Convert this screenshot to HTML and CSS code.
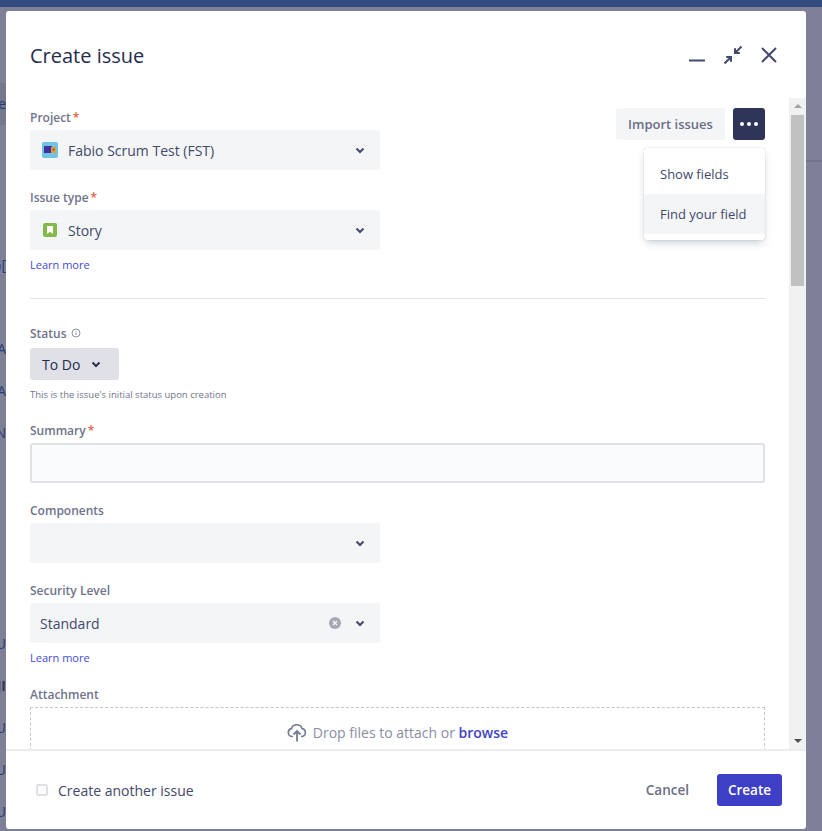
FILE: index.html
```html
<!DOCTYPE html>
<html lang="en">
<head>
<meta charset="utf-8">
<title>Create issue</title>
<link rel="stylesheet" href="styles.css">
</head>
<body>
<div class="page">
  <div class="topbar"></div>
  <div class="strip">
    <span class="frag frag-a band">ie</span>
    <span class="frag frag-b">G[</span>
    <span class="frag frag-c">A</span>
    <span class="frag">A</span>
    <span class="frag">'N</span>
    <span class="frag frag-d">U</span>
    <span class="frag bold">JI</span>
    <span class="frag">U</span>
    <span class="frag">U</span>
    <span class="frag">U</span>
  </div>
  <div class="rule-right"></div>
</div>
<section class="modal">
  <header class="modal-head">
    <h1>Create issue</h1>
    <div class="win-icons">
      <svg width="16" height="16" viewBox="0 0 16 16"><path d="M0 13.5h16" stroke="#42496b" stroke-width="2" fill="none"/></svg>
      <svg width="20" height="20" viewBox="0 0 20 20"><path d="M18.5 1.5L13 7M12 3.2V8h4.8" stroke="#42496b" stroke-width="2" fill="none"/><path d="M1.5 18.5L7 13M3.2 12H8v4.8" stroke="#42496b" stroke-width="2" fill="none"/></svg>
      <svg width="16" height="16" viewBox="0 0 16 16"><path d="M1 1l14 14M15 1L1 15" stroke="#42496b" stroke-width="2" fill="none"/></svg>
    </div>
  </header>
  <div class="modal-body">
    <div class="form">
      <div class="top-row">
        <div class="top-fields">
          <label class="label first">Project<span class="req">*</span></label>
          <div class="select">
            <svg class="ico" width="16" height="16" viewBox="0 0 16 16"><rect width="16" height="16" rx="2" fill="#6fc3e6"/><rect x="2" y="4" width="8" height="7" fill="#43309c"/><rect x="9" y="5" width="5" height="6" fill="#d9a13a"/><rect x="10.500" y="6.500" width="2" height="2" fill="#b5482f"/></svg>
            <span class="val">Fabio Scrum Test (FST)</span>
            <svg class="chev" width="10" height="7" viewBox="0 0 10 7"><path d="M1.500 1.500L5 5l3.500-3.500" stroke="#42496b" stroke-width="2" fill="none"/></svg>
          </div>
          <label class="label">Issue type<span class="req">*</span></label>
          <div class="select">
            <svg class="ico story" width="14" height="14" viewBox="0 0 14 14"><rect width="14" height="14" rx="2" fill="#84bb48"/><path d="M4 3h6v8L7 8.800 4 11z" fill="#fff"/></svg>
            <span class="val">Story</span>
            <svg class="chev" width="10" height="7" viewBox="0 0 10 7"><path d="M1.500 1.500L5 5l3.500-3.500" stroke="#42496b" stroke-width="2" fill="none"/></svg>
          </div>
          <a class="learn">Learn more</a>
        </div>
        <div class="actions">
          <button class="btn-import">Import issues</button>
          <button class="btn-dots"><i></i><i></i><i></i></button>
          <div class="menu">
            <div class="menu-item">Show fields</div>
            <div class="menu-item active">Find your field</div>
          </div>
        </div>
      </div>
      <hr class="divider">
      <label class="label status-label">Status
        <svg class="info" width="10" height="10" viewBox="0 0 10 10"><circle cx="5" cy="5" r="4" stroke="#8f92a8" fill="none"/><path d="M5 4.500v2.500M5 2.700v1" stroke="#8f92a8" fill="none"/></svg>
      </label>
      <button class="btn-status">To Do
        <svg width="10" height="7" viewBox="0 0 10 7"><path d="M1.500 1.500L5 5l3.500-3.500" stroke="#2b3052" stroke-width="2" fill="none"/></svg>
      </button>
      <p class="helper">This is the issue's initial status upon creation</p>
      <label class="label summary-label">Summary<span class="req">*</span></label>
      <div class="input"></div>
      <label class="label">Components</label>
      <div class="select">
        <span class="val"></span>
        <svg class="chev" width="10" height="7" viewBox="0 0 10 7"><path d="M1.500 1.500L5 5l3.500-3.500" stroke="#42496b" stroke-width="2" fill="none"/></svg>
      </div>
      <label class="label">Security Level</label>
      <div class="select plain">
        <span class="val">Standard</span>
        <svg class="clear" width="12" height="12" viewBox="0 0 12 12"><circle cx="6" cy="6" r="6" fill="#a5a7b5"/><path d="M4 4l4 4M8 4l-4 4" stroke="#f4f5f7" stroke-width="1.500"/></svg>
        <svg class="chev" width="10" height="7" viewBox="0 0 10 7"><path d="M1.500 1.500L5 5l3.500-3.500" stroke="#42496b" stroke-width="2" fill="none"/></svg>
      </div>
      <a class="learn">Learn more</a>
      <label class="label attach-label">Attachment</label>
      <div class="drop">
        <svg width="20" height="18" viewBox="0 0 20 18"><path d="M6 12.500H5A4 4 0 0 1 4.500 4.600 5.500 5.500 0 0 1 15 4.600 4 4 0 0 1 15 12.500h-1" stroke="#757a93" stroke-width="1.600" fill="none"/><path d="M10 17.500V7.500M6.500 10.500L10 7l3.500 3.500" stroke="#757a93" stroke-width="1.800" fill="none"/></svg>
        <span>Drop files to attach or <a class="browse">browse</a></span>
      </div>
    </div>
    <div class="scrollbar">
      <span class="arrow-up"></span>
      <div class="thumb"></div>
      <span class="arrow-down"></span>
    </div>
  </div>
  <footer class="modal-foot">
    <label class="check"><span class="box"></span>Create another issue</label>
    <div class="foot-btns">
      <button class="btn-cancel">Cancel</button>
      <button class="btn-create">Create</button>
    </div>
  </footer>
</section>
</body>
</html>
```

FILE: styles.css
```css
* { box-sizing: border-box; }
html, body { margin: 0; padding: 0; height: 100%; }
body {
  font-family: "Open Sans", "Noto Sans", sans-serif;
  font-size: 14px;
  color: #42496b;
  background: #7e8098;
  overflow: hidden;
}
.page { position: relative; height: 831px; }
.topbar { height: 7px; background: #344b7f; }
.strip {
  width: 6px;
  overflow: hidden;
  display: flex;
  flex-direction: column;
  padding-top: 76px;
}
.frag {
  height: 42px;
  line-height: 42px;
  font-size: 14px;
  color: #2b3a70;
  display: flex;
  justify-content: flex-end;
  white-space: nowrap;
}
.band { background: #75778f; }
.frag-b { margin-top: 119px; }
.frag-c { margin-top: 42px; }
.frag-d { margin-top: 169px; }
.bold { font-weight: 700; color: #3b3550; }
.rule-right { position: absolute; left: 806px; right: 0; top: 160px; height: 2px; background: #72748e; }

.modal {
  position: absolute;
  left: 6px;
  top: 11px;
  width: 800px;
  height: 818px;
  background: #fff;
  border-radius: 3px;
  display: flex;
  flex-direction: column;
  overflow: hidden;
}
.modal-head {
  height: 87px;
  flex: none;
  display: flex;
  justify-content: space-between;
  align-items: flex-start;
  padding: 32px 29px 0 24px;
}
h1 {
  margin: 0;
  font-size: 20px;
  line-height: 26px;
  font-weight: 500;
  color: #262b4d;
}
.win-icons { display: flex; gap: 18px; align-items: center; margin-top: 2px; }
.modal-body { flex: 1; min-height: 0; display: flex; }
.form { flex: 1; min-width: 0; overflow: hidden; padding: 0 24px; }
.top-row { display: flex; justify-content: space-between; align-items: flex-start; }
.top-fields { width: 350px; }
.label {
  display: block;
  font-size: 12px;
  line-height: 16px;
  font-weight: 600;
  color: #70738c;
  margin: 20px 0 4px;
}
.label.first { margin-top: 12px; }
.req { color: #de5e3e; margin-left: 2px; }
.select {
  width: 350px;
  height: 40px;
  background: #f4f5f7;
  border-radius: 3px;
  display: flex;
  align-items: center;
  padding: 0 15px 0 12px;
  color: #42496b;
}
.ico { flex: none; margin-right: 10px; }
.ico.story { margin: 0 11px 0 1px; }
.val { flex: 1; }
.plain { padding-left: 10px; }
.clear { margin-right: 14px; }
.learn {
  display: block;
  font-size: 11px;
  line-height: 14px;
  margin-top: 8px;
  color: #4549d6;
}
.actions { position: relative; display: flex; gap: 8px; margin-top: 10px; }
.btn-import {
  height: 32px;
  width: 109px;
  border: 0;
  padding: 0;
  border-radius: 3px;
  background: #f4f5f7;
  font: 600 13px "Open Sans", "Noto Sans", sans-serif;
  color: #6b6e88;
}
.btn-dots {
  width: 32px;
  height: 32px;
  border: 0;
  border-radius: 3px;
  background: #2f3459;
  display: flex;
  align-items: center;
  justify-content: center;
  gap: 3px;
  padding: 0;
}
.btn-dots i { width: 4px; height: 4px; border-radius: 50%; background: #fff; }
.menu {
  position: absolute;
  right: 0;
  top: 40px;
  width: 121px;
  padding: 6px 0;
  background: #fff;
  border-radius: 3px;
  box-shadow: 0 4px 8px -2px rgba(9, 30, 66, .25), 0 0 1px rgba(9, 30, 66, .31);
}
.menu-item { height: 40px; line-height: 40px; padding-left: 16px; font-size: 13px; color: #42496b; white-space: nowrap; }
.menu-item.active { background: #f4f5f7; }
.divider { border: 0; height: 1px; background: #dfe1e6; margin: 26px 0 0; }
.status-label { margin: 27px 0 6px; display: flex; align-items: center; gap: 4px; }
.info { margin-top: -2px; }
.btn-status {
  display: flex;
  align-items: center;
  gap: 11px;
  width: 89px;
  height: 32px;
  padding: 0 0 0 12px;
  border: 0;
  border-radius: 3px;
  background: #dfe1e6;
  font: 400 14px "Open Sans", "Noto Sans", sans-serif;
  color: #262b4d;
}
.helper { margin: 8px 0 0; font-size: 9.500px; line-height: 14px; color: #70738c; }
.summary-label { margin-top: 21px; }
.input { height: 40px; border: 2px solid #dfe1e6; border-radius: 3px; background: #fafbfc; }
.attach-label { margin-top: 22px; }
.drop {
  height: 80px;
  border: 1px dashed #c1c7d0;
  display: flex;
  justify-content: center;
  align-items: flex-start;
  gap: 6px;
  padding-top: 15px;
  color: #8a8da3;
}
.drop svg { margin-top: 1px; }
.browse { color: #3f44c8; font-weight: 600; }
.scrollbar {
  width: 17px;
  flex: none;
  background: #f1f1f1;
  display: flex;
  flex-direction: column;
  align-items: center;
  padding: 0 2px;
}
.arrow-up, .arrow-down { width: 0; height: 0; border: 4px solid transparent; flex: none; }
.arrow-up { border-bottom: 4px solid #a3a3a3; border-top: 0; margin: 6px 0 7px; }
.arrow-down { border-top: 4px solid #505050; border-bottom: 0; margin: auto 0 6px; }
.thumb { width: 13px; height: 171px; background: #c1c1c1; flex: none; }
.modal-foot {
  height: 80px;
  flex: none;
  border-top: 2px solid #ebecf0;
  display: flex;
  justify-content: space-between;
  align-items: center;
  padding: 0 24px 0 30px;
}
.check { display: flex; align-items: center; gap: 10px; color: #42496b; }
.box { width: 12px; height: 12px; border: 2px solid #dfe1e6; border-radius: 2px; background: #fafbfc; }
.foot-btns { display: flex; align-items: center; gap: 28px; }
.btn-cancel {
  border: 0;
  background: none;
  padding: 0;
  font: 600 13.500px "Open Sans", "Noto Sans", sans-serif;
  color: #6b6e88;
}
.btn-create {
  width: 65px;
  height: 32px;
  border: 0;
  padding: 0;
  border-radius: 3px;
  background: #3d40c6;
  color: #fff;
  font: 600 13.500px "Open Sans", "Noto Sans", sans-serif;
}
```
